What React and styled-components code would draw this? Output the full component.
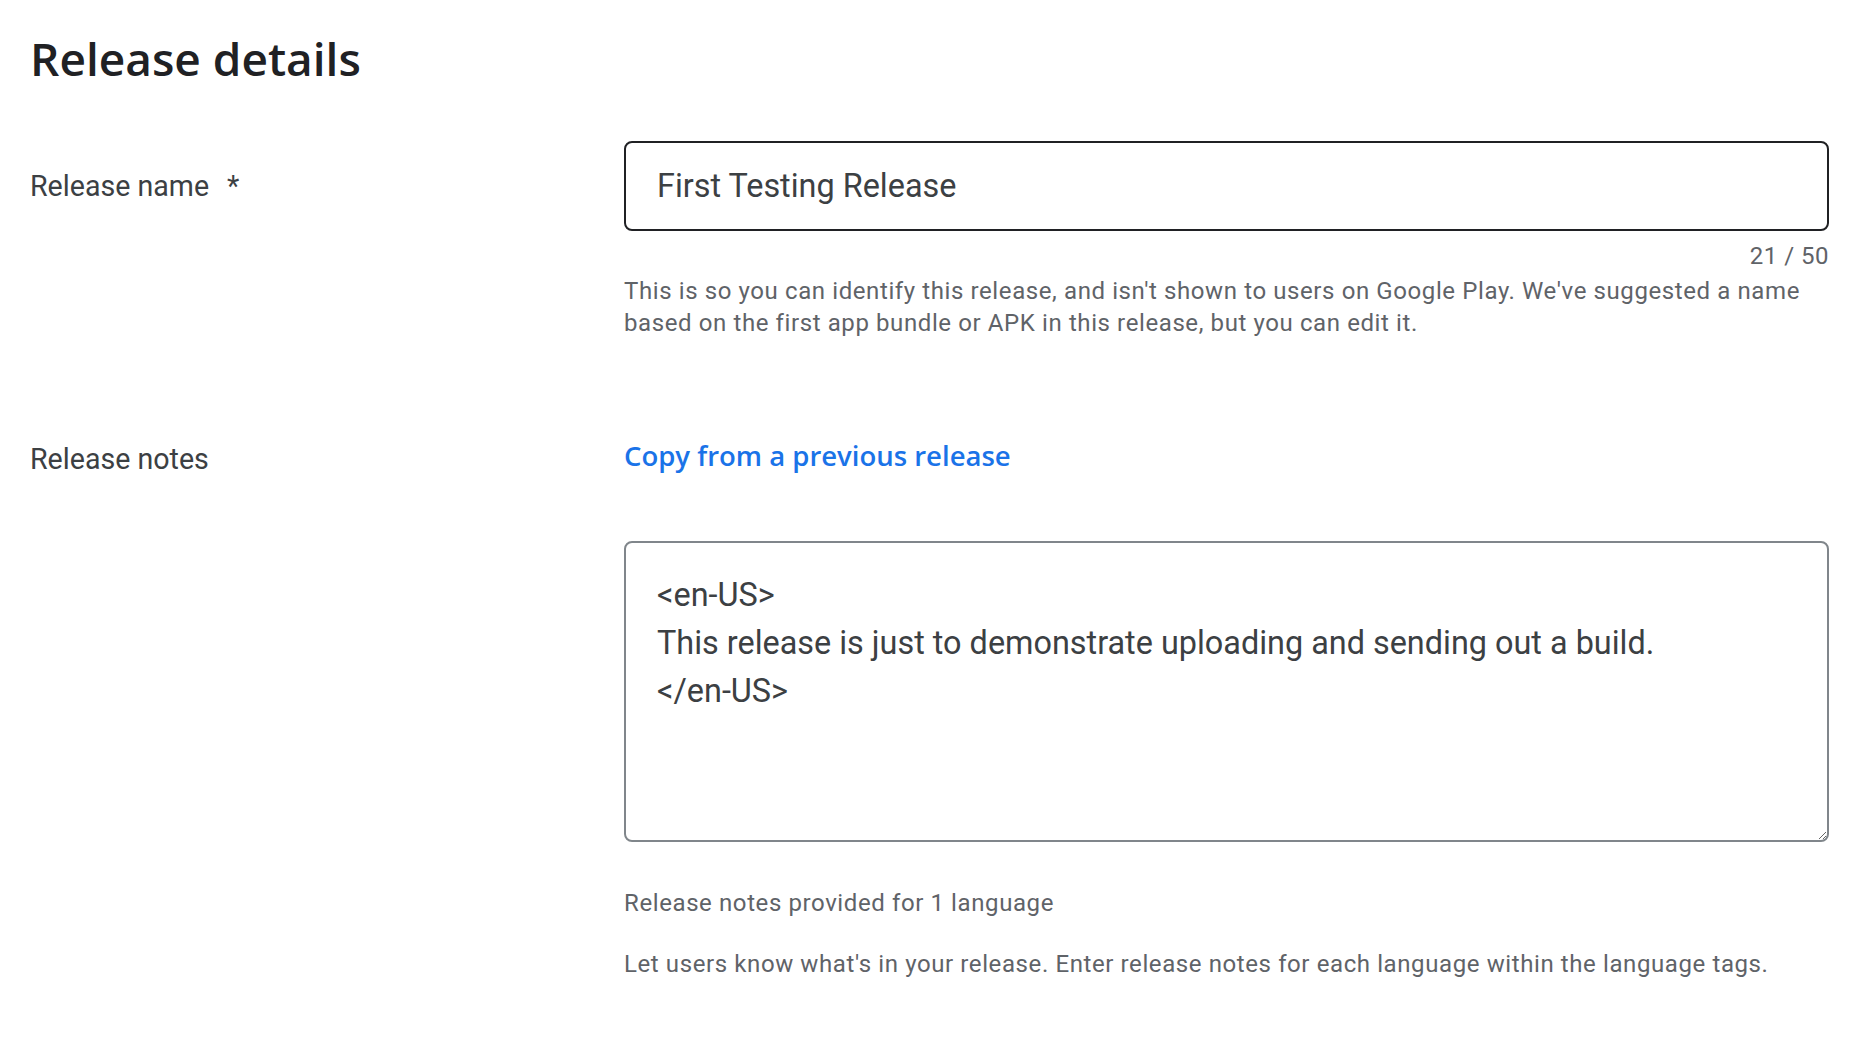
import React from "react";
import styled, { createGlobalStyle } from "styled-components";

const GlobalStyle = createGlobalStyle`
  html, body {
    margin: 0;
    padding: 0;
    background: #ffffff;
  }
  body {
    font-family: Roboto, "Liberation Sans", Arial, sans-serif;
    color: #3c4043;
  }
  * { box-sizing: border-box; }
`;

const Page = styled.main`
  padding: 30px 43px 0 30px;
`;

const Title = styled.h1`
  margin: 0 0 55px 0;
  font-family: "Open Sans", Roboto, sans-serif;
  font-weight: 600;
  font-size: 46px;
  line-height: 56px;
  color: #202124;
`;

const Row = styled.section`
  display: grid;
  grid-template-columns: 594px 1fr;
  margin-top: ${(p) => p.$gap || 0}px;
`;

const Label = styled.div`
  padding-top: ${(p) => p.$offset}px;
  font-family: Roboto, sans-serif;
  font-size: 28.6px;
  line-height: 36px;
  color: #3c4043;
`;

const Required = styled.span`
  margin-left: 18px;
`;

const Field = styled.div`
  display: flex;
  flex-direction: column;
  min-width: 0;
`;

const TextInput = styled.input`
  height: 90px;
  width: 100%;
  padding: 0 31px;
  border: 2px solid #202124;
  border-radius: 8px;
  font-family: Roboto, sans-serif;
  font-size: 32.4px;
  color: #3c4043;
  background: #fff;
  outline: none;
`;

const Counter = styled.div`
  margin-top: 11px;
  text-align: right;
  font-size: 24px;
  line-height: 28px;
  letter-spacing: 0.5px;
  color: #5f6368;
`;

const HelpText = styled.p`
  margin: ${(p) => p.$top}px 0 0;
  font-size: 24px;
  line-height: 32px;
  letter-spacing: 0.6px;
  color: #5f6368;
`;

const CopyLink = styled.a`
  align-self: flex-start;
  font-family: "Open Sans", Roboto, sans-serif;
  font-weight: 600;
  font-size: 27.5px;
  line-height: 36px;
  color: #1a73e8;
  text-decoration: none;
  cursor: pointer;
`;

const NotesArea = styled.textarea`
  margin-top: 67px;
  width: 100%;
  height: 301px;
  padding: 28px 31px 0;
  border: 2px solid #80868b;
  border-radius: 8px;
  font-family: Roboto, sans-serif;
  font-size: 32.4px;
  line-height: 48px;
  color: #3c4043;
  background: #fff;
  outline: none;
  resize: vertical;
  display: block;
`;

export default function App() {
  const name = "First Testing Release";
  const notes =
    "<en-US>\nThis release is just to demonstrate uploading and sending out a build.\n</en-US>";
  return (
    <>
      <GlobalStyle />
      <Page>
        <Title>Release details</Title>

        <Row>
          <Label $offset={27}>
            Release name<Required>*</Required>
          </Label>
          <Field>
            <TextInput defaultValue={name} maxLength={50} />
            <Counter>{name.length} / 50</Counter>
            <HelpText $top={5}>
              This is so you can identify this release, and isn't shown to users on Google Play.
              We've suggested a name based on the first app bundle or APK in this release, but you
              can edit it.
            </HelpText>
          </Field>
        </Row>

        <Row $gap={99}>
          <Label $offset={3}>Release notes</Label>
          <Field>
            <CopyLink>Copy from a previous release</CopyLink>
            <NotesArea defaultValue={notes} spellCheck={false} />
            <HelpText $top={45}>Release notes provided for 1 language</HelpText>
            <HelpText $top={29}>
              Let users know what's in your release. Enter release notes for each language within
              the language tags.
            </HelpText>
          </Field>
        </Row>
      </Page>
    </>
  );
}
